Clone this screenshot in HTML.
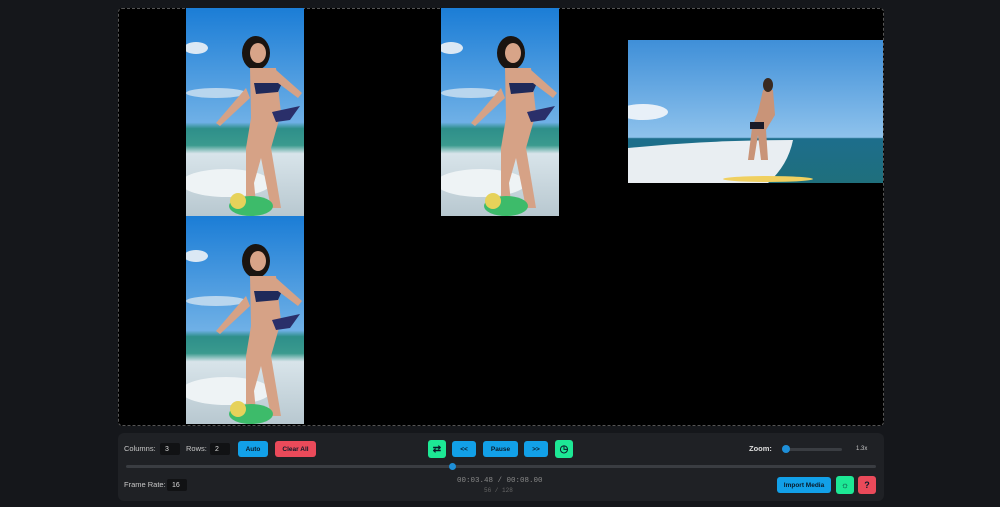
<!DOCTYPE html>
<html><head><meta charset="utf-8"><style>
*{box-sizing:border-box;margin:0;padding:0}
body{width:1000px;height:507px;background:#15171b;font-family:"Liberation Sans",sans-serif;position:relative;overflow:hidden}
.canvas{position:absolute;left:118px;top:8px;width:766px;height:418px;background:#000;border:1px dashed #555;border-radius:4px}
.tile{position:absolute}
.panel{position:absolute;left:118px;top:433px;width:766px;height:68px;background:#1f2125;border-radius:6px}
.lbl{position:absolute;font-size:7.5px;color:#c8c8c8;line-height:10px}
.inp{position:absolute;height:12px;background:#111214;border-radius:2px;color:#ddd;font-size:7px;padding:0 5px;display:flex;align-items:center}
.btn{position:absolute;height:16px;border-radius:3px;font-size:6.5px;font-weight:bold;color:#0a1a2a;display:flex;align-items:center;justify-content:center}
.blue{background:#12a0e8}.red{background:#ea4a5a}.green{background:#1de895}
</style></head><body>
<div class="canvas"></div>
<svg width="0" height="0" style="position:absolute">
<defs>
<linearGradient id="sky" x1="0" y1="0" x2="0" y2="1"><stop offset="0" stop-color="#1b7dd6"/><stop offset=".55" stop-color="#6fb0e6"/><stop offset=".58" stop-color="#2e8f8a"/><stop offset=".66" stop-color="#3a9a8e"/><stop offset=".7" stop-color="#d8e4ea"/><stop offset="1" stop-color="#b8c8d0"/></linearGradient>
<g id="p">
<rect width="118" height="208" fill="url(#sky)"/>
<ellipse cx="10" cy="40" rx="12" ry="6" fill="#dbe8f4"/>
<ellipse cx="30" cy="85" rx="30" ry="5" fill="#b9d6ee"/>
<ellipse cx="40" cy="175" rx="45" ry="14" fill="#eef3f5"/>
<ellipse cx="70" cy="45" rx="14" ry="17" fill="#1a1410"/>
<ellipse cx="72" cy="45" rx="8" ry="10" fill="#d8a488"/>
<path d="M64 60 L90 60 L95 105 L85 140 L95 200 L85 200 L75 150 L68 175 L70 195 L60 190 L60 140 L65 110 Z" fill="#d6a286"/>
<path d="M68 75 L96 75 L92 84 L70 86 Z" fill="#1f2a5a"/>
<path d="M86 104 L114 98 L104 112 L90 114 Z" fill="#2a2f6a"/>
<path d="M60 80 L30 115 L34 118 L64 90 Z M90 62 L116 85 L112 90 L88 72 Z" fill="#d6a286"/>
<ellipse cx="65" cy="198" rx="22" ry="10" fill="#3dbb6a"/>
<ellipse cx="52" cy="193" rx="8" ry="8" fill="#e6d25a"/>
</g>
</defs></svg>
<svg class="tile" style="left:186px;top:8px" width="118" height="208"><use href="#p"/></svg>
<svg class="tile" style="left:186px;top:216px" width="118" height="209"><use href="#p"/></svg>
<svg class="tile" style="left:441px;top:8px" width="118" height="208"><use href="#p"/></svg>
<svg class="tile" style="left:628px;top:40px" width="255" height="143">
<defs><linearGradient id="s2" x1="0" y1="0" x2="0" y2="1"><stop offset="0" stop-color="#3f8fd8"/><stop offset=".68" stop-color="#8ec2ec"/><stop offset=".69" stop-color="#1d6e8c"/><stop offset="1" stop-color="#1f6f7c"/></linearGradient></defs>
<rect width="255" height="143" fill="url(#s2)"/>
<ellipse cx="15" cy="72" rx="25" ry="8" fill="#e8f0f8"/>
<path d="M0 108 Q80 100 165 100 Q160 125 140 143 L0 143 Z" fill="#e9eef2"/>
<path d="M135 50 L145 50 L147 75 L138 90 L140 120 L133 120 L130 95 L126 120 L120 120 L124 88 L130 72 Z" fill="#c99478"/>
<rect x="122" y="82" width="14" height="7" fill="#1a1a28"/>
<ellipse cx="140" cy="45" rx="5" ry="7" fill="#3a2a20"/>
<ellipse cx="140" cy="139" rx="45" ry="3" fill="#f0d060"/>
</svg>
<div class="panel">
<div class="lbl" style="left:6px;top:11px">Columns:</div>
<div class="inp" style="left:42px;top:10px;width:20px">3</div>
<div class="lbl" style="left:68px;top:11px">Rows:</div>
<div class="inp" style="left:92px;top:10px;width:20px">2</div>
<div class="btn blue" style="left:120px;top:8px;width:30px">Auto</div>
<div class="btn red" style="left:157px;top:8px;width:41px">Clear All</div>
<div class="btn green" style="left:310px;top:7px;width:18px;height:18px;font-size:10px">⇄</div>
<div class="btn blue" style="left:334px;top:8px;width:24px">&lt;&lt;</div>
<div class="btn blue" style="left:365px;top:8px;width:35px">Pause</div>
<div class="btn blue" style="left:406px;top:8px;width:24px">&gt;&gt;</div>
<div class="btn green" style="left:437px;top:7px;width:18px;height:18px;font-size:10px">◷</div>
<div class="lbl" style="left:631px;top:11px;font-weight:bold;color:#ddd">Zoom:</div>
<div style="position:absolute;left:664px;top:15px;width:60px;height:3px;background:#3a3d42;border-radius:2px"></div>
<div style="position:absolute;left:664px;top:12px;width:8px;height:8px;background:#1e8fd8;border-radius:50%"></div>
<div class="lbl" style="left:738px;top:11px;font-size:6px">1.3x</div>
<div style="position:absolute;left:8px;top:32px;width:750px;height:3px;background:#3a3d42;border-radius:2px"></div>
<div style="position:absolute;left:331px;top:30px;width:7px;height:7px;background:#1e8fd8;border-radius:50%"></div>
<div class="lbl" style="left:6px;top:47px">Frame Rate:</div>
<div class="inp" style="left:49px;top:46px;width:20px">16</div>
<div class="lbl" style="left:339px;top:43px;font-family:'Liberation Mono',monospace;color:#888">00:03.48 / 00:08.00</div>
<div class="lbl" style="left:366px;top:53px;font-family:'Liberation Mono',monospace;color:#666;font-size:6px">56 / 128</div>
<div class="btn blue" style="left:659px;top:44px;width:54px">Import Media</div>
<div class="btn green" style="left:718px;top:43px;width:18px;height:18px;font-size:9px">☼</div>
<div class="btn red" style="left:740px;top:43px;width:18px;height:18px;font-size:9px">?</div>
</div>
</body></html>
